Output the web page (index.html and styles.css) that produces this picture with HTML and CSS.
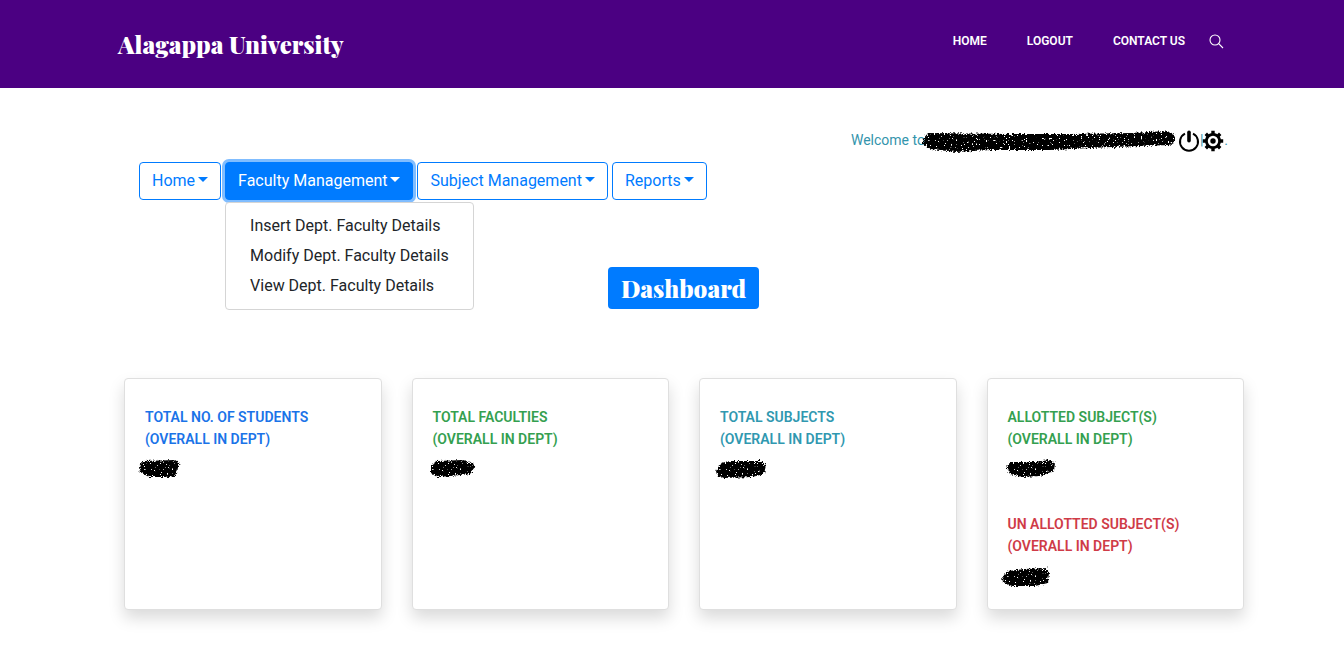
FILE: index.html
```html
<!DOCTYPE html>
<html lang="en">
<head>
    <meta charset="UTF-8">
    <meta name="viewport" content="width=device-width, initial-scale=1.0">
    <title>Alagappa University - Dashboard</title>
    <link rel="stylesheet" href="styles.css">
</head>
<body>

<!-- Rough marker strokes used to hide private values -->
<svg class="defs" aria-hidden="true">
    <filter id="marker" x="-10%" y="-30%" width="120%" height="160%">
        <feTurbulence type="fractalNoise" baseFrequency="0.6" numOctaves="2" seed="4" result="noise"/>
        <feDisplacementMap in="SourceGraphic" in2="noise" scale="5" xChannelSelector="R" yChannelSelector="G" result="rough"/>
        <feColorMatrix in="noise" type="matrix" values="0 0 0 0 0  0 0 0 0 0  0 0 0 0 0  20 0 0 0 -13.4" result="specks"/>
        <feComposite in="rough" in2="specks" operator="out"/>
    </filter>
</svg>

<header class="header">
    <div class="container header-inner">
        <a class="logo" href="#">Alagappa University</a>
        <nav class="top-nav">
            <a href="#">HOME</a>
            <a href="#">LOGOUT</a>
            <a href="#">CONTACT US</a>
            <button class="search" type="button" aria-label="Search">
                <svg width="16" height="16" viewBox="0 0 16 16" fill="none" stroke="#fff" stroke-width="1.1">
                    <circle cx="6" cy="7" r="5"/>
                    <path d="M9.7 10.7L14 15"/>
                </svg>
            </button>
        </nav>
    </div>
</header>

<main class="container">
    <div class="welcome">
        <span>Welcome to</span>
        <svg class="marker" width="256" height="26" viewBox="0 0 256 26">
            <path d="M2 12L7 6L90 7L150 7L210 6L246 4L253 7L254 14L249 18L190 20L130 23L70 23L35 25L10 22L2 17Z"/>
        </svg>
        <a class="icon" href="#" aria-label="Log out">
            <svg width="22" height="24" viewBox="0 0 22 24" fill="none" stroke="#000">
                <path d="M7 5.6A9 9 0 1 0 15 5.6" stroke-width="2"/>
                <path d="M11 4.2V12.8" stroke-width="3.6" stroke-linecap="round"/>
            </svg>
        </a>
        <span class="divider">|</span>
        <a class="icon" href="#" aria-label="Settings">
            <svg width="22" height="24" viewBox="0 -2 22 24" fill="none" stroke="#000">
                <circle cx="11" cy="11" r="6.6" stroke-width="2.8"/>
                <path d="M11 0.8V4M11 18V21.2M0.8 11H4M18 11H21.2M3.8 3.8L6.2 6.2M15.8 15.8L18.2 18.2M18.2 3.8L15.8 6.2M6.2 15.8L3.8 18.2" stroke-width="3.4"/>
                <circle cx="11" cy="11" r="2.7" fill="#000" stroke="none"/>
            </svg>
        </a>
        <span>.</span>
    </div>

    <div class="menu">
        <button class="btn" type="button">Home</button>
        <div class="dropdown">
            <button class="btn active" type="button" aria-expanded="true">Faculty Management</button>
            <div class="dropdown-menu">
                <a href="#">Insert Dept. Faculty Details</a>
                <a href="#">Modify Dept. Faculty Details</a>
                <a href="#">View Dept. Faculty Details</a>
            </div>
        </div>
        <button class="btn" type="button">Subject Management</button>
        <button class="btn" type="button">Reports</button>
    </div>

    <div class="title">
        <h1>Dashboard</h1>
    </div>

    <div class="cards">
        <div class="card blue">
            <h2>TOTAL NO. OF STUDENTS<br>(OVERALL IN DEPT)</h2>
            <svg class="marker" width="52" height="24" viewBox="0 0 52 24">
                <path d="M2 11L6 5L38 4L43 7L40 13L38 21L12 21L3 16Z"/>
            </svg>
        </div>
        <div class="card green">
            <h2>TOTAL FACULTIES<br>(OVERALL IN DEPT)</h2>
            <svg class="marker" width="52" height="24" viewBox="0 0 52 24">
                <path d="M6 9L12 5L38 4L48 7L50 12L45 18L25 20L12 21L6 17Z"/>
            </svg>
        </div>
        <div class="card teal">
            <h2>TOTAL SUBJECTS<br>(OVERALL IN DEPT)</h2>
            <svg class="marker" width="56" height="24" viewBox="0 0 56 24">
                <path d="M4 15L9 7L18 5L48 5L54 9L52 18L40 21L12 22L5 19Z"/>
            </svg>
        </div>
        <div class="card green">
            <h2>ALLOTTED SUBJECT(S)<br>(OVERALL IN DEPT)</h2>
            <svg class="marker" width="56" height="24" viewBox="0 0 56 24">
                <path d="M6 11L11 6L35 6L49 4L55 7L54 15L40 20L22 21L10 18Z"/>
            </svg>
            <h2 class="red">UN ALLOTTED SUBJECT(S)<br>(OVERALL IN DEPT)</h2>
            <svg class="marker" width="56" height="24" viewBox="0 0 56 24">
                <path d="M2 15L7 8L25 6L46 5L49 10L48 20L35 23L12 23L3 19Z"/>
            </svg>
        </div>
    </div>
</main>

</body>
</html>
```

FILE: styles.css
```css
* { box-sizing: border-box; }
body { margin: 0; background-color: #fff; font-family: Roboto, sans-serif; font-size: 16px; line-height: 24px; color: #212529; }
a { color: inherit; text-decoration: none; }
button { font-family: inherit; cursor: pointer; }
svg { display: block; }
.defs { position: absolute; width: 0; height: 0; }
.container { width: 100%; max-width: 1140px; margin: 0 auto; padding: 0 15px; }

/* header */
.header { background-color: #4b0082; color: #fff; }
.header-inner { display: flex; justify-content: space-between; align-items: flex-start; padding: 24px 13px 24px 16px; }
.logo { font-family: "Playfair Display", "Liberation Serif", serif; font-size: 24px; font-weight: 900; line-height: 40px; }
.top-nav { display: flex; align-items: center; gap: 40px; font-size: 12px; font-weight: 600; line-height: 34px; }
.search { margin-left: -16px; margin-right: 4px; padding: 0; border: 0; background: none; }

/* welcome line */
.welcome { display: flex; justify-content: flex-end; align-items: center; height: 24px; margin: 40px -1px 0 0; font-size: 14px; color: #3394ac; }
.marker { fill: #000; filter: url(#marker); }
.welcome .marker { margin: 0 1px 0 -4px; }
.divider { margin: 0 -1px 0 0; }

/* menu */
.menu { display: flex; flex-wrap: wrap; gap: 4px; margin: 10px 0 0 22px; }
.btn { padding: 6px 12px; border: 1px solid #007bff; border-radius: 4px; background-color: #fff; color: #007bff; font-size: 16px; line-height: 24px; }
.btn::after { content: ""; display: inline-block; margin-left: 3px; vertical-align: 4px; border-top: 5px solid; border-left: 5px solid transparent; border-right: 5px solid transparent; }
.btn.active { background-color: #007bff; color: #fff; box-shadow: 0 0 0 3px #80bdff; }
.dropdown { position: relative; }
.dropdown-menu { position: absolute; top: 100%; left: 0; margin-top: 2px; padding: 8px 0; border: 1px solid #d5d5d5; border-radius: 4px; background-color: #fff; }
.dropdown-menu a { display: block; padding: 3px 24px; white-space: nowrap; }

.title { display: flex; justify-content: center; margin: 67px 0 0 23px; }
.title h1 { margin: 0; padding: 6px 13px; border-radius: 4px; background-color: #007bff; color: #fff; font-family: "Playfair Display", "Liberation Serif", serif; font-size: 24px; font-weight: 900; line-height: 30px; }

/* cards */
.cards { display: grid; grid-template-columns: repeat(4, 1fr); gap: 30px; margin: 69px -17px 40px 7px; }
.card { min-height: 232px; padding: 27px 12px 19px; border: 1px solid #dfdfdf; border-radius: 4px; background-color: #fff; box-shadow: 0 8px 16px rgba(0, 0, 0, 0.15); }
.card h2 { margin: 0 0 6px; padding-left: 8px; font-size: 14px; font-weight: 600; line-height: 22px; }
.card h2.red { margin-top: 33px; }
.blue { color: #1a73e8; }
.green { color: #34a04f; }
.teal { color: #3098b0; }
.red { color: #cf3b47; }
```
